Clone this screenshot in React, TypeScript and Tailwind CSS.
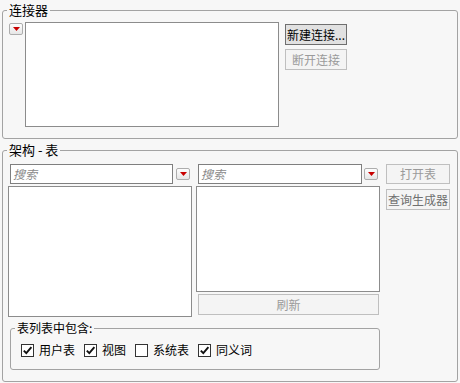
const font = { fontFamily: '"Noto Sans CJK SC", "Noto Sans", sans-serif' };

const DropButton = ({ className = '' }: { className?: string }) => (
  <div
    className={`w-[14px] h-[12px] shrink-0 rounded-[2px] border border-[#adadad] bg-gradient-to-b from-[#fdfdfd] to-[#e6e6e6] flex items-center justify-center ${className}`}
  >
    <svg width="7" height="4" viewBox="0 0 7 4">
      <polygon points="0,0 7,0 3.5,4" fill="#c80000" />
    </svg>
  </div>
);

const SearchBox = ({ width }: { width: string }) => (
  <div className={`${width} h-[20px] border border-[#7f7f7f] bg-white pl-[2px] flex items-center`}>
    <span className="text-[12px] leading-[14px] italic text-[#8a8a8a]">搜索</span>
  </div>
);

const Check = ({ checked, label }: { checked: boolean; label: string }) => (
  <div className="flex items-center gap-[5px]">
    <div className="w-[13px] h-[13px] border border-[#333333] bg-white flex items-center justify-center">
      {checked && (
        <svg width="11" height="11" viewBox="0 0 11 11">
          <path d="M1.8 5.6 L4.3 8.2 L9.4 2.2" fill="none" stroke="#111" strokeWidth="1.9" />
        </svg>
      )}
    </div>
    <span className="text-[12px] leading-[16px] text-black">{label}</span>
  </div>
);

const DisabledButton = ({ children, className = '', tone = 'text-[#9a9a9a]' }: { children: string; className?: string; tone?: string }) => (
  <div
    className={`h-[21px] border border-[#bfbfbf] bg-[#f4f4f4] flex items-center justify-center text-[12px] leading-[14px] ${tone} ${className}`}
  >
    {children}
  </div>
);

export default function App() {
  return (
    <div className="w-[460px] h-[383px] bg-[#f7f7f7] pt-[2px] pl-[2px] text-black" style={font}>
      {/* 连接器 */}
      <fieldset className="w-[456px] border border-[#a3a3a3] rounded-[3px] pl-[6px] pt-[4px] pb-[11px]">
        <legend className="ml-[-2px] px-[2px] text-[13px] leading-[16px]">连接器</legend>
        <div className="flex items-start">
          <DropButton className="mt-[1px]" />
          <div className="ml-[2px] w-[254px] h-[105px] border border-[#8c8c8c] bg-white" />
          <div className="ml-[6px] mt-[2px] flex flex-col gap-[4px]">
            <div className="w-[62px] h-[21px] border border-[#6f6f6f] bg-[#e1e1e1] flex items-center justify-center text-[12px] leading-[14px] whitespace-nowrap">
              新建连接...
            </div>
            <DisabledButton className="w-[62px]">断开连接</DisabledButton>
          </div>
        </div>
      </fieldset>

      {/* 架构 - 表 */}
      <fieldset className="mt-[3px] w-[456px] border border-[#a3a3a3] rounded-[3px] pl-[5px] pt-[6px] pb-[11px]">
        <legend className="ml-[-1px] px-[2px] text-[13px] leading-[16px]">架构 - 表</legend>
        <div className="flex items-start">
          <div className="w-[184px] flex flex-col">
            <div className="pl-[2px] flex items-center gap-[3px]">
              <SearchBox width="w-[163px]" />
              <DropButton />
            </div>
            <div className="mt-[2px] h-[131px] border border-[#8c8c8c] bg-white" />
          </div>
          <div className="ml-[4px] w-[184px] flex flex-col">
            <div className="pl-[2px] flex items-center gap-[2px]">
              <SearchBox width="w-[164px]" />
              <DropButton />
            </div>
            <div className="mt-[2px] h-[106px] border border-[#8c8c8c] bg-white" />
            <DisabledButton className="mt-[2px] ml-[2px] w-[181px]">刷新</DisabledButton>
          </div>
          <div className="ml-[6px] flex flex-col gap-[5px]">
            <DisabledButton className="w-[64px] !h-[20px]">打开表</DisabledButton>
            <DisabledButton className="w-[64px]" tone="text-[#707070]">查询生成器</DisabledButton>
          </div>
        </div>

        <fieldset className="mt-[3px] ml-[2px] w-[370px] border border-[#a3a3a3] rounded-[3px] pl-[4px] pt-[6px] pb-[11px]">
          <legend className="px-[2px] text-[12px] leading-[16px]">表列表中包含:</legend>
          <div className="ml-[6px] h-[16px] flex items-center gap-[9px]">
            <Check checked label="用户表" />
            <Check checked label="视图" />
            <Check checked={false} label="系统表" />
            <Check checked label="同义词" />
          </div>
        </fieldset>
      </fieldset>
    </div>
  );
}
